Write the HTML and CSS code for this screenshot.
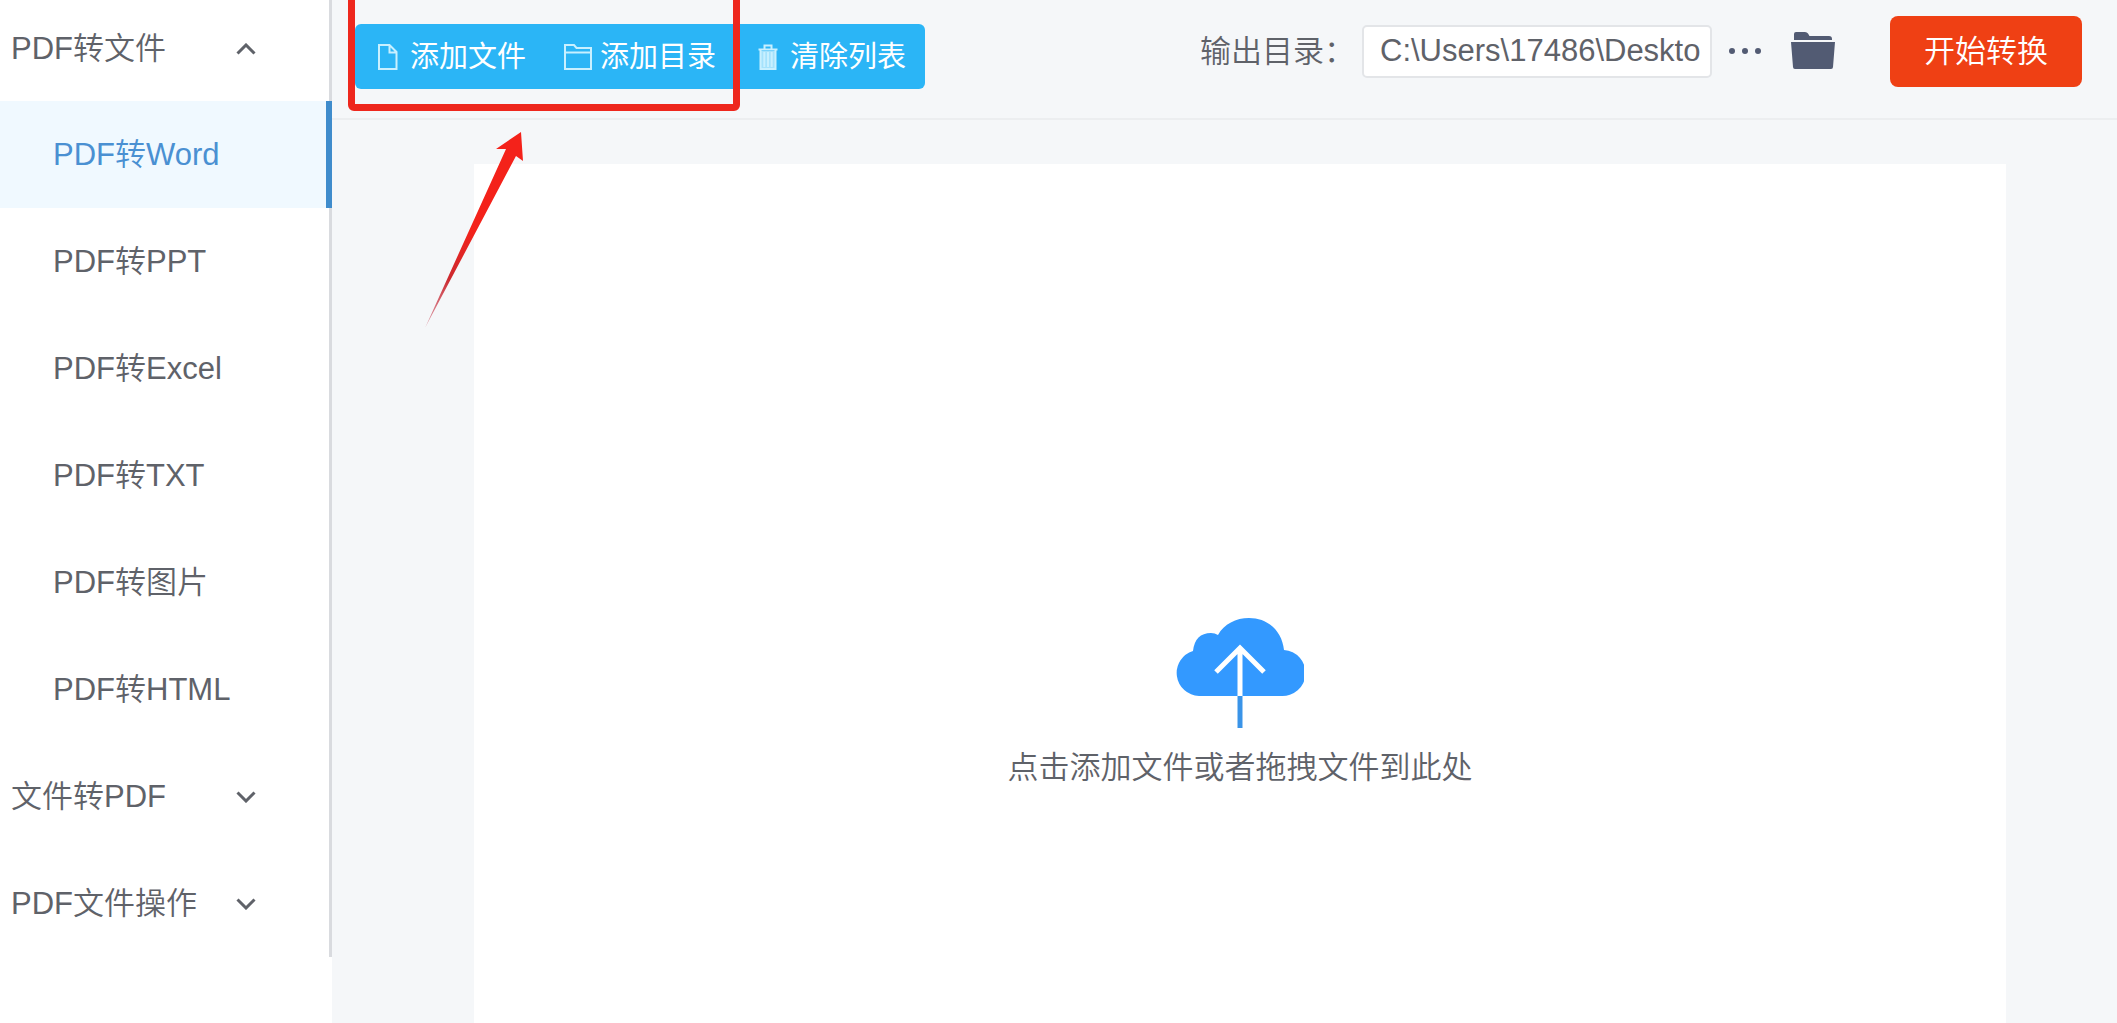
FILE: index.html
```html
<!DOCTYPE html>
<html lang="zh-CN">
<head>
<meta charset="utf-8">
<title>PDF转换器</title>
<link rel="stylesheet" href="styles.css">
</head>
<body>
<div class="app">
  <aside class="sidebar">
    <nav class="menu">
      <button class="group group-first" type="button" aria-expanded="true"><span class="group-name">PDF转文件</span>
        <svg class="chevron" viewBox="0 0 20 12"><path d="M1.5 10.5 10 2l8.500 8.500"/></svg></button>
      <a class="item item-active" href="#word">PDF转Word</a>
      <a class="item" href="#ppt">PDF转PPT</a>
      <a class="item" href="#excel">PDF转Excel</a>
      <a class="item" href="#txt">PDF转TXT</a>
      <a class="item" href="#image">PDF转图片</a>
      <a class="item" href="#html">PDF转HTML</a>
      <button class="group" type="button" aria-expanded="false"><span class="group-name">文件转PDF</span>
        <svg class="chevron" viewBox="0 0 20 12"><path d="M1.500 1.500 10 10l8.500-8.500"/></svg></button>
      <button class="group" type="button" aria-expanded="false"><span class="group-name">PDF文件操作</span>
        <svg class="chevron" viewBox="0 0 20 12"><path d="M1.500 1.500 10 10l8.500-8.500"/></svg></button>
    </nav>
  </aside>

  <main class="main">
    <header class="header">
      <div class="toolbar">
        <button class="tool" type="button">
          <svg class="tool-icon" viewBox="0 0 28 28"><path d="M5 2h10.500l7 7v17H5zM15.500 2.500v7h6.500"/></svg>添加文件</button>
        <button class="tool" type="button">
          <svg class="tool-icon" viewBox="0 0 28 28"><path d="M1 26V2h9l2.500 3H27v21zM1 9.500h26"/></svg>添加目录</button>
        <button class="tool" type="button">
          <svg class="tool-icon" viewBox="0 0 28 28"><path d="M7 8h14v18H7z" fill="#a5e2fc" stroke="none"/><path d="M4.500 6.500h19M10.500 6V2.500h7V6M6.500 7v19h15V7M10.300 9v15M14 9v15M17.700 9v15"/></svg>清除列表</button>
      </div>
      <div class="output">
        <label class="output-label" for="dir">输出目录：</label>
        <input class="output-path" id="dir" type="text" value="C:\Users\17486\Deskto">
        <button class="icon-button more" type="button" aria-label="选择目录">
          <svg width="34" height="8" viewBox="0 0 34 8"><circle cx="4" cy="3" r="3"/><circle cx="17" cy="3" r="3"/><circle cx="30" cy="3" r="3"/></svg></button>
        <button class="icon-button folder" type="button" aria-label="打开目录">
          <svg width="46" height="40" viewBox="0 0 46 40"><path d="M4 8V2q0-2 2-2h9q2 0 3 1.500L19.500 4H39q3 0 3 3v1z"/><path d="M1 10h44l-2 25q0 2-2 2H5q-2 0-2-2z"/></svg></button>
        <button class="start" type="button">开始转换</button>
      </div>
    </header>
    <section class="workspace">
      <button class="drop" type="button">
        <svg class="cloud" width="128" height="112" viewBox="0 0 128 112">
          <path d="M23 79A23 23 0 0 1 17 34Q19 16 35 16Q39 16 42 18C48 7 60 1 73 1C92 1 106 14 108 33A23 23 0 0 1 105 79z" fill="#3399ff"/>
          <path d="M64 79V31M40 55l24-24 24 24" fill="none" stroke="#fff" stroke-width="5"/>
          <path d="M64 79v32" stroke="#3a94e8" stroke-width="5"/>
        </svg>
        <span>点击添加文件或者拖拽文件到此处</span>
      </button>
    </section>
    <div class="highlight"></div>
    <svg class="pointer" width="102" height="200" viewBox="0 0 102 200">
      <defs><linearGradient id="fade" x1="0" y1="1" x2="0" y2="0"><stop offset="0" stop-color="#c03048" stop-opacity=".4"/><stop offset=".25" stop-color="#cc2a30"/><stop offset=".5" stop-color="#f4221a"/></linearGradient></defs>
      <path d="M97 2 99 31 92 26 1 198 82 19 72 19z" fill="url(#fade)"/>
    </svg>
  </main>
</div>
</body>
</html>
```
FILE: styles.css
```css
* { box-sizing: border-box; }

body {
  margin: 0;
  background: #fff;
  color: #5f6269;
  font: 350 31px/40px "Liberation Sans", "Noto Sans CJK SC", sans-serif;
}

button, input {
  margin: 0;
  padding: 0;
  border: 0;
  background: none;
  color: inherit;
  font: inherit;
}

button { cursor: pointer; }

.app { display: flex; min-height: 100vh; }

/* Sidebar */
.sidebar { flex: 0 0 332px; background: #fff; }

.menu {
  display: flex;
  flex-direction: column;
  border-right: 3px solid #d9dbdf;
}

.group, .item {
  display: flex;
  align-items: center;
  height: 107px;
}

.group { padding-left: 11px; text-align: left; }
.group-first { height: 101px; padding-bottom: 4px; }
.group-name { width: 225px; }

.chevron {
  width: 20px;
  height: 12px;
  fill: none;
  stroke: #5f6269;
  stroke-width: 3;
}

.item { padding-left: 53px; color: inherit; text-decoration: none; }

.item-active {
  margin-right: -3px;
  border-right: 6px solid #3f8ccc;
  background: #f0f9ff;
  color: #4a90d2;
}

/* Header */
.main {
  position: relative;
  display: flex;
  flex: 1;
  flex-direction: column;
  min-width: 0;
  background: #f5f7f9;
}

.header {
  display: flex;
  align-items: flex-start;
  justify-content: space-between;
  height: 120px;
  padding: 16px 35px 0 23px;
  border-bottom: 2px solid #eceef0;
}

.toolbar {
  display: flex;
  margin-top: 8px;
  overflow: hidden;
  border-radius: 6px;
  background: #2bb5f6;
}

.tool {
  display: flex;
  align-items: center;
  gap: 8px;
  height: 65px;
  padding: 0 19px;
  color: #fff;
  font-size: 29px;
  font-weight: 400;
  white-space: nowrap;
}

.tool-icon {
  width: 28px;
  height: 28px;
  fill: none;
  stroke: #c8f0ff;
  stroke-width: 2;
}

.output { display: flex; align-items: center; height: 71px; }
.output-label { white-space: nowrap; }

.output-path {
  width: 350px;
  height: 53px;
  margin-left: 7px;
  padding: 0 0 2px 16px;
  border: 2px solid #e3e5e8;
  border-radius: 5px;
  background: #fff;
}

.icon-button { display: flex; fill: #525b73; }
.more { margin-left: 16px; }
.folder { margin-left: 28px; }

.start {
  width: 192px;
  height: 71px;
  margin-left: 54px;
  border-radius: 8px;
  background: #ef4014;
  color: #fff;
}

/* Drop area */
.workspace {
  display: flex;
  flex: 1;
  padding: 44px 111px 0 142px;
}

.drop {
  display: flex;
  flex: 1;
  flex-direction: column;
  align-items: center;
  gap: 19px;
  padding-top: 453px;
  background: #fff;
}

/* Annotation over the header */
.highlight {
  position: absolute;
  top: -10px;
  left: 16px;
  width: 392px;
  height: 121px;
  border: 7px solid #ee271d;
  border-radius: 6px;
  pointer-events: none;
}

.pointer {
  position: absolute;
  top: 130px;
  left: 92px;
  pointer-events: none;
}
```
